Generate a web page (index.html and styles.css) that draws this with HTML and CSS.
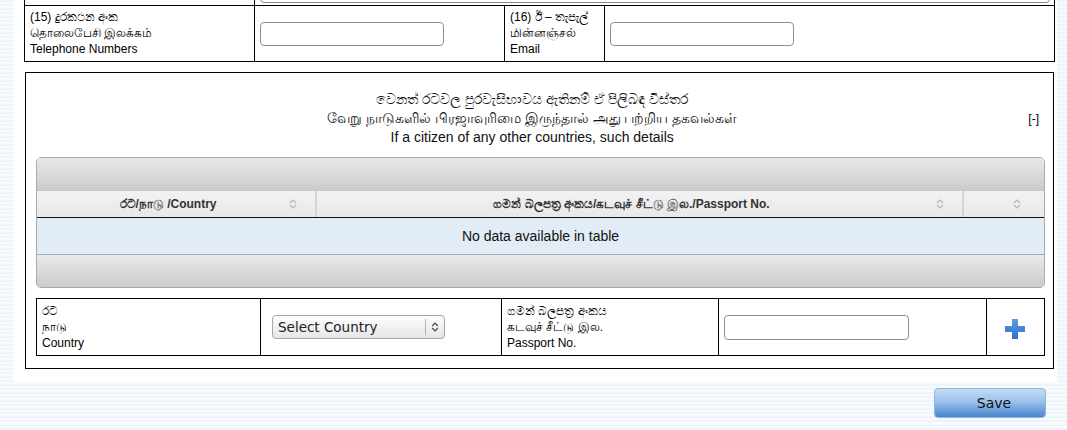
FILE: index.html
```html
<!DOCTYPE html>
<html>
<head>
<meta charset="utf-8">
<link rel="stylesheet" href="styles.css">
</head>
<body>
<div class="panel">
  <table class="form-table top-table">
    <tr class="cut-row">
      <td class="lbl w230"></td>
      <td colspan="3" class="fld"><div class="wide-input"></div></td>
    </tr>
    <tr>
      <td class="lbl w230">(15) දුරකථන අංක<br>தொலைபேசி இலக்கம்<br><span class="en">Telephone Numbers</span></td>
      <td class="fld w250"><input class="txt" type="text"></td>
      <td class="lbl w100">(16) ඊ – තැපැල්<br>மின்னஞ்சல்<br><span class="en">Email</span></td>
      <td class="fld"><input class="txt" type="text"></td>
    </tr>
  </table>

  <section class="box">
    <div class="box-head">
      <div class="heading">
        <div>වෙනත් රටවල පුරවැසිභාවය ඇතිනම් ඒ පිලිබඳ විස්තර</div>
        <div>வேறு நாடுகளில் பிரஜாவுரிமை இருந்தால் அது பற்றிய தகவல்கள்</div>
        <div>If a citizen of any other countries, such details</div>
      </div>
      <span class="toggle">[-]</span>
    </div>

    <div class="dt">
      <div class="dt-bar dt-top"></div>
      <div class="dt-head">
        <div class="th c1"><span class="th-text">රට/நாடு /Country</span><svg class="sort" width="8" height="10" viewBox="0 0 8 10"><path d="M1 4 L4 1 L7 4 M1 6 L4 9 L7 6" fill="none" stroke="#b5b5b5" stroke-width="1.1"/></svg></div>
        <div class="th c2"><span class="th-text">ගමන් බලපත්‍ර අංකය/கடவுச் சீட்டு இல./Passport No.</span><svg class="sort" width="8" height="10" viewBox="0 0 8 10"><path d="M1 4 L4 1 L7 4 M1 6 L4 9 L7 6" fill="none" stroke="#b5b5b5" stroke-width="1.1"/></svg></div>
        <div class="th c3"><svg class="sort" width="8" height="10" viewBox="0 0 8 10"><path d="M1 4 L4 1 L7 4 M1 6 L4 9 L7 6" fill="none" stroke="#b5b5b5" stroke-width="1.1"/></svg></div>
      </div>
      <div class="dt-empty">No data available in table</div>
      <div class="dt-bar dt-bottom"></div>
    </div>

    <table class="form-table add-table">
      <tr>
        <td class="lbl a1">රට<br>நாடு<br><span class="en">Country</span></td>
        <td class="fld a2">
          <div class="select-wrap">
            <select class="sel"><option>Select Country</option></select>
            <span class="sel-arrow"><svg width="8" height="10" viewBox="0 0 8 10"><path d="M1.2 4 L4 1.2 L6.8 4 M1.2 6 L4 8.8 L6.8 6" fill="none" stroke="#444" stroke-width="1.2"/></svg></span>
          </div>
        </td>
        <td class="lbl a3">ගමන් බලපත්‍ර අංකය<br>கடவுச் சீட்டு இல.<br><span class="en">Passport No.</span></td>
        <td class="fld a4"><input class="txt pass" type="text"></td>
        <td class="fld a5">
          <svg class="plus" width="20" height="20" viewBox="0 0 20 20">
            <defs><linearGradient id="pg" x1="0" y1="0" x2="0" y2="1"><stop offset="0" stop-color="#5b9be6"/><stop offset="1" stop-color="#2f6fc9"/></linearGradient></defs>
            <path d="M7 0 H13 V7 H20 V13 H13 V20 H7 V13 H0 V7 H7 Z" fill="url(#pg)"/>
          </svg>
        </td>
      </tr>
    </table>
  </section>
</div>
<div class="actions">
  <button class="save" type="button">Save</button>
</div>
</body>
</html>
```

FILE: styles.css
```css
html, body {
  margin: 0;
  padding: 0;
}
body {
  background: repeating-linear-gradient(to bottom, #eef4fa 0px, #eef4fa 2px, #f8fbfd 2px, #f8fbfd 4px);
  font-family: "Liberation Sans", Arial, "Noto Sans", sans-serif;
  color: #000;
  overflow: hidden;
  height: 430px;
}
.panel {
  margin-left: 14px;
  width: 1043px;
  background: #fff;
  padding: 0 0 14px 10px;
  box-sizing: border-box;
  height: 382px;
  overflow: hidden;
}
.form-table {
  border-collapse: collapse;
  font-size: 12px;
  line-height: 16px;
}
.form-table td {
  border: 1px solid #000;
  vertical-align: middle;
}
.top-table {
  width: 1031px;
  margin-top: -36px;
}
.cut-row td {
  height: 40px;
  padding: 0;
  vertical-align: bottom;
}
.wide-input {
  margin: 0 4px 2px 5px;
  height: 24px;
  border: 1px solid #8c8c8c;
  border-radius: 4px;
}
.lbl {
  padding: 3px 5px 4px;
  text-align: left;
}
.fld {
  padding: 0 5px;
}
.w230 { width: 219px; }
.w250 { width: 239px; }
.w100 { width: 89px; }
.en {
  font-size: 12px;
}
.txt {
  display: block;
  width: 184px;
  height: 24px;
  box-sizing: border-box;
  border: 1px solid #8f8f8f;
  border-radius: 4px;
  padding: 0 4px;
  background: #fff;
  margin: 0;
}
.box {
  margin: 10px 0 0 1px;
  width: 1029px;
  box-sizing: border-box;
  border: 1px solid #000;
  padding: 17px 8px 12px 10px;
}
.box-head {
  display: flex;
  align-items: center;
}
.heading {
  flex: 1;
  text-align: center;
  font-size: 14px;
  line-height: 19px;
  color: #111;
}
.toggle {
  font-size: 12px;
  margin: 0 6px 0 0;
  color: #000;
}
.dt {
  margin-top: 10px;
  border: 1px solid #aaa;
  border-radius: 5px;
  overflow: hidden;
}
.dt-bar {
  height: 32px;
  background: linear-gradient(to bottom, #e9e9e9, #cbcbcb);
}
.dt-top {
  border-bottom: 1px solid #c6c6c6;
}
.dt-bottom {
  border-top: 1px solid #aaa;
}
.dt-head {
  display: flex;
  height: 26px;
  background: linear-gradient(to bottom, #f2f2f2, #e8e8e8);
  border-bottom: 1px solid #111;
}
.th {
  display: flex;
  align-items: center;
  box-sizing: border-box;
  font-size: 12px;
  font-weight: bold;
  color: #333;
  padding: 0 18px 0 10px;
}
.th + .th {
  border-left: 2px solid #d4d4d4;
}
.th-text {
  flex: 1;
  text-align: center;
}
.c1 { width: 278px; }
.c2 { width: 647px; }
.c3 {
  flex: 1;
  justify-content: center;
  padding: 0 0 0 26px;
}
.dt-empty {
  height: 36px;
  line-height: 36px;
  background: #e1ecf6;
  text-align: center;
  font-size: 14px;
  color: #111;
}
.add-table {
  width: 1009px;
  margin-top: 10px;
}
.add-table .lbl {
  padding: 4px 5px 4px;
}
.a1 { width: 213px; }
.a2 { width: 224px; padding-left: 11px; }
.a3 { width: 206px; }
.a4 { width: 257px; }
.a5 { text-align: center; padding-top: 4px; padding-right: 6px; }
.select-wrap {
  position: relative;
  width: 173px;
}
.sel {
  -webkit-appearance: none;
  appearance: none;
  display: block;
  width: 173px;
  height: 24px;
  box-sizing: border-box;
  border: 1px solid #a6a6a6;
  border-radius: 4px;
  background: linear-gradient(to bottom, #fdfdfd, #e6e6e6);
  font-family: "DejaVu Sans", Verdana, sans-serif;
  font-size: 13.5px;
  color: #222;
  padding: 0 24px 0 5px;
  margin: 0;
}
.sel-arrow {
  position: absolute;
  right: 1px;
  top: 4px;
  bottom: 4px;
  width: 18px;
  border-left: 1px solid #b5b5b5;
  display: flex;
  align-items: center;
  justify-content: center;
  pointer-events: none;
}
.pass {
  width: 185px;
  height: 25px;
}
.plus {
  display: inline-block;
  vertical-align: middle;
}
.actions {
  display: flex;
  justify-content: flex-end;
  padding: 6px 21px 0 0;
}
.save {
  width: 112px;
  height: 30px;
  border: 1px solid #8fb5e0;
  border-radius: 4px;
  background: linear-gradient(to bottom, #c2dcf3 0%, #9cc2ea 45%, #4a85d0 100%);
  font-family: "DejaVu Sans", Tahoma, sans-serif;
  font-size: 14px;
  color: #111;
  padding: 0 0 0 8px;
}
```
